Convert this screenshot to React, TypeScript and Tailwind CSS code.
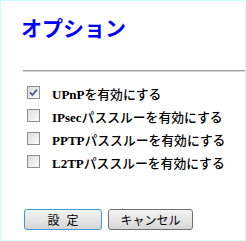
import React from "react";

const options = [
  { latin: "UPnP", label: "を有効にする", checked: true },
  { latin: "IPsec", label: "パススルーを有効にする", checked: false },
  { latin: "PPTP", label: "パススルーを有効にする", checked: false },
  { latin: "L2TP", label: "パススルーを有効にする", checked: false },
];

function Box({ checked }: { checked: boolean }) {
  return (
    <div className="w-[13px] h-[13px] border border-[#8f8f8f] bg-gradient-to-br from-[#dcdcdc] to-[#fbfbfb] flex items-center justify-center shrink-0">
      {checked && (
        <svg width="9" height="9" viewBox="0 0 9 9">
          <path d="M1 4.5 L3.5 7 L8 1.5" fill="none" stroke="#4a5a9a" strokeWidth="1.8" />
        </svg>
      )}
    </div>
  );
}

export default function App() {
  return (
    <div className="w-[246px] h-[241px] bg-white border border-[#ccffff] text-black">
      <h1 className="pl-[20px] pt-[11px] text-[21px] leading-[30px] font-bold text-[#0000ff] font-['Noto_Sans_CJK_JP',sans-serif]">
        オプション
      </h1>
      <div className="ml-[22px] mt-[28px] h-[2px] bg-[#a0a0a0] border-b border-[#d8d8d8]" />

      <div className="mt-[14px] pl-[26px] flex flex-col gap-[10px]">
        {options.map((o) => (
          <div key={o.latin} className="flex items-center gap-[12px] h-[13px]">
            <Box checked={o.checked} />
            <span className="leading-none whitespace-nowrap">
              <span className="font-['Liberation_Serif',serif] text-[13px] font-bold">{o.latin}</span>
              <span className="font-['Noto_Sans_CJK_JP',sans-serif] text-[12.8px] font-medium">{o.label}</span>
            </span>
          </div>
        ))}
      </div>

      <div className="mt-[41px] pl-[23px] flex gap-[6px] font-['Noto_Sans_CJK_JP',sans-serif] text-[12px]">
        <button className="w-[78px] h-[21px] rounded-[3px] border border-[#3c98d8] bg-gradient-to-b from-[#f4f4f4] to-[#d6d6d6] tracking-[7px] pl-[7px] leading-none">
          設定
        </button>
        <button className="w-[85px] h-[21px] rounded-[3px] border border-[#707070] bg-gradient-to-b from-[#f4f4f4] to-[#d6d6d6] leading-none">
          キャンセル
        </button>
      </div>
    </div>
  );
}
